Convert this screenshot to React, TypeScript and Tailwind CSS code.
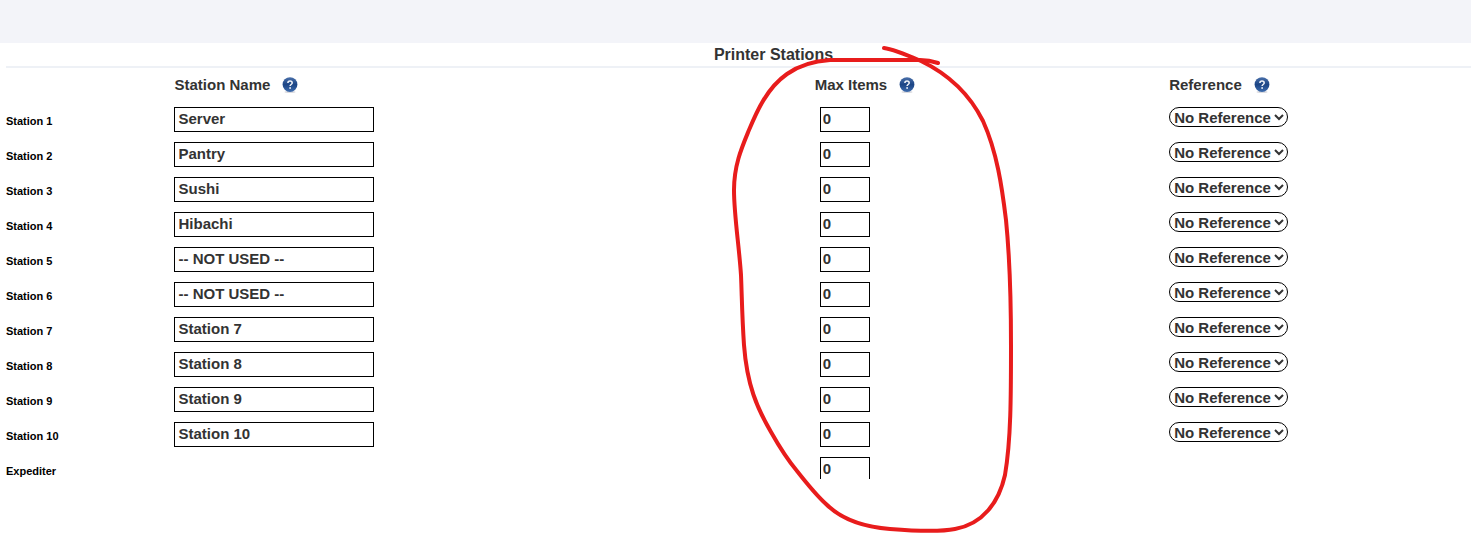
import { useState } from 'react';

interface Station {
  label: string;
  name?: string;
  maxItems: string;
  reference?: string;
}

const INITIAL_STATIONS: Station[] = [
  { label: 'Station 1', name: 'Server', maxItems: '0', reference: 'none' },
  { label: 'Station 2', name: 'Pantry', maxItems: '0', reference: 'none' },
  { label: 'Station 3', name: 'Sushi', maxItems: '0', reference: 'none' },
  { label: 'Station 4', name: 'Hibachi', maxItems: '0', reference: 'none' },
  { label: 'Station 5', name: '-- NOT USED --', maxItems: '0', reference: 'none' },
  { label: 'Station 6', name: '-- NOT USED --', maxItems: '0', reference: 'none' },
  { label: 'Station 7', name: 'Station 7', maxItems: '0', reference: 'none' },
  { label: 'Station 8', name: 'Station 8', maxItems: '0', reference: 'none' },
  { label: 'Station 9', name: 'Station 9', maxItems: '0', reference: 'none' },
  { label: 'Station 10', name: 'Station 10', maxItems: '0', reference: 'none' },
  { label: 'Expediter', maxItems: '0' },
];

function HelpIcon() {
  return (
    <svg className="w-4 h-4" viewBox="0 0 16 16" aria-hidden="true">
      <defs>
        <linearGradient id="helpBlue" x1="0" y1="0" x2="0" y2="1">
          <stop offset="0" stopColor="#4a70aa" />
          <stop offset="0.5" stopColor="#1c4585" />
          <stop offset="1" stopColor="#3d6cae" />
        </linearGradient>
      </defs>
      <ellipse cx="8" cy="15" rx="5.5" ry="1" fill="#d9d9de" />
      <circle cx="8" cy="7.6" r="7.4" fill="url(#helpBlue)" />
      <path d="M5.9 6C5.9 4.6 6.8 4 8 4s2.2.7 2.2 1.9c0 1.5-2.1 1.7-2.1 3.1" fill="none" stroke="#f1f4f9" strokeWidth="1.5" />
      <circle cx="8.1" cy="11" r="0.9" fill="#f1f4f9" />
    </svg>
  );
}

function ColumnHeader({ title }: { title: string }) {
  return (
    <div className="flex items-center gap-3">
      <span>{title}</span>
      <button type="button" aria-label={`Help: ${title}`}>
        <HelpIcon />
      </button>
    </div>
  );
}

// Hand-drawn marker loop around the Max Items column
function MarkerLoop() {
  return (
    <svg
      className="absolute top-0 left-[49.5%] w-[290px] h-[534px] pointer-events-none"
      viewBox="728 0 290 534"
      fill="none"
      stroke="#e81c1c"
      strokeWidth="4"
      strokeLinecap="round"
      strokeLinejoin="round"
      aria-hidden="true"
    >
      <path d="M884 48C893 49 907 55 921 61C950 75 970 95 983 121C997 152 1002 187 1006 220C1010 260 1011 300 1011 345C1011 395 1011 440 1005 475C999 502 983 524 955 529C940 532 915 531 890 529C864 527 842 520 826 504C816 495 808 485 797 471C787 459 780 448 771 432C757 408 747 385 744 345C742 315 742 300 741 275C739 245 734 215 734 190C734 165 742 147 749 130C757 111 767 88 787 74C801 64 815 61 830 60H920C926 60 932 61 938 63" />
    </svg>
  );
}

export default function App() {
  const [stations, setStations] = useState(INITIAL_STATIONS);

  function update(index: number, patch: Partial<Station>) {
    setStations(stations.map((s, i) => (i === index ? { ...s, ...patch } : s)));
  }

  return (
    <div className="relative min-h-screen overflow-hidden bg-white font-['Liberation_Sans',Arial,sans-serif] font-bold text-[#333]">
      <header className="h-[43px] bg-[#f3f4f9]" />

      <main className="pl-1.5">
        <h1 className="pl-[70px] pt-px text-center text-base leading-[22px] border-b-2 border-[#eef1f6]">
          Printer Stations
        </h1>

        <div className="h-[411px] overflow-hidden">
          <table className="w-full table-fixed text-[15px]">
            <colgroup>
              <col className="w-[11.5%]" />
              <col className="w-[43.7%]" />
              <col className="w-[24.2%]" />
              <col />
            </colgroup>
            <thead>
              <tr className="h-[34px]">
                <td />
                <th scope="col" className="text-left"><ColumnHeader title="Station Name" /></th>
                <th scope="col" className="text-left"><ColumnHeader title="Max Items" /></th>
                <th scope="col" className="text-left"><ColumnHeader title="Reference" /></th>
              </tr>
            </thead>
            <tbody>
              {stations.map((s, i) => (
                <tr key={s.label} className="h-[35px] align-top">
                  <th scope="row" className="pt-[11px] text-left text-[11px] leading-4 text-black">{s.label}</th>
                  <td className="pt-[5px]">
                    {s.name !== undefined && (
                      <input
                        type="text"
                        aria-label={`${s.label} name`}
                        value={s.name}
                        onChange={(e) => update(i, { name: e.target.value })}
                        className="block w-[200px] h-[25px] px-[3px] pb-[3px] border border-black"
                      />
                    )}
                  </td>
                  <td className="pt-[5px] pl-[5px]">
                    <input
                      type="text"
                      aria-label={`${s.label} max items`}
                      value={s.maxItems}
                      onChange={(e) => update(i, { maxItems: e.target.value })}
                      className="block w-[50px] h-[25px] px-0.5 pb-[3px] border border-black"
                    />
                  </td>
                  <td className="pt-[5px]">
                    {s.reference !== undefined && (
                      <select
                        aria-label={`${s.label} reference`}
                        value={s.reference}
                        onChange={(e) => update(i, { reference: e.target.value })}
                        className="block w-[119px] h-5 pb-px rounded-full border border-black bg-white leading-4"
                      >
                        <option value="none">No Reference</option>
                      </select>
                    )}
                  </td>
                </tr>
              ))}
            </tbody>
          </table>
        </div>
      </main>

      <MarkerLoop />
    </div>
  );
}
